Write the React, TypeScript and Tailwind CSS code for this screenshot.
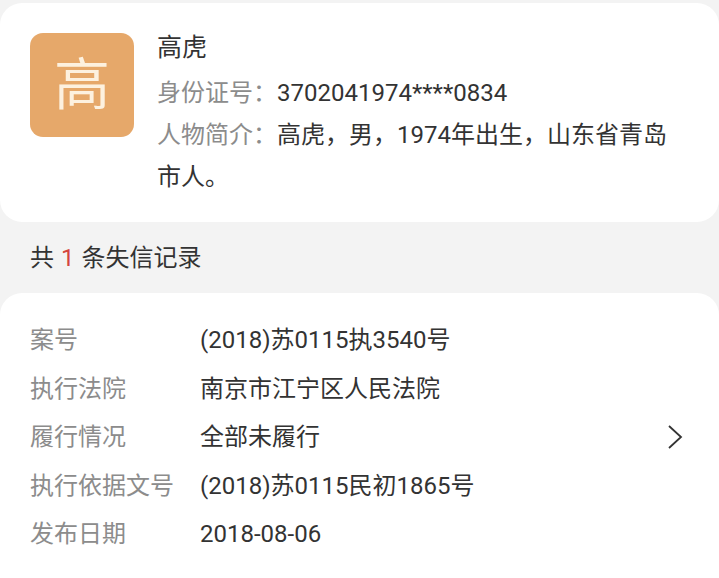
const rows = [
  { label: '案号', value: '(2018)苏0115执3540号' },
  { label: '执行法院', value: '南京市江宁区人民法院' },
  { label: '履行情况', value: '全部未履行' },
  { label: '执行依据文号', value: '(2018)苏0115民初1865号' },
  { label: '发布日期', value: '2018-08-06' },
];

export default function App() {
  return (
    <div
      className="min-h-[578px] bg-[#f3f3f3] pt-[3px] text-[#333333]"
      style={{ fontFamily: 'Roboto, "Noto Sans CJK SC", sans-serif' }}
    >
      {/* Person card */}
      <div className="bg-white rounded-[22px] pt-[24px] pb-[24px] pl-[30px] pr-[36px] flex gap-[23px]">
        <div className="mt-[6px] w-[104px] h-[104px] shrink-0 rounded-[13px] bg-[#e6a86a] flex items-center justify-center">
          <span className="text-[56px] leading-none text-[#fdf1df]">高</span>
        </div>
        <div className="flex-1">
          <div className="text-[25px] leading-[48px] -mt-[3px]">高虎</div>
          <div className="text-[24px] leading-[42px]">
            <span className="text-[#8c8c8c]">身份证号：</span>
            <span>3702041974****0834</span>
          </div>
          <p className="text-[24px] leading-[42px]">
            <span className="text-[#8c8c8c]">人物简介：</span>
            <span>高虎，男，1974年出生，山东省青岛市人。</span>
          </p>
        </div>
      </div>

      {/* Record count */}
      <div className="h-[71px] flex items-center px-[30px] text-[24px]">
        <span>共</span>
        <span className="text-[#d4453d] mx-[7px]">1</span>
        <span>条失信记录</span>
      </div>

      {/* Record card */}
      <div className="bg-white rounded-t-[22px] pt-[23px] pb-[23px] pl-[30px] pr-[36px] flex items-center">
        <div className="flex-1">
          {rows.map((row) => (
            <div key={row.label} className="flex h-[48.5px] items-center text-[24px]">
              <div className="w-[170px] shrink-0 text-[#8c8c8c]">{row.label}</div>
              <div>{row.value}</div>
            </div>
          ))}
        </div>
        <svg width="16" height="26" viewBox="0 0 16 26" className="shrink-0">
          <polyline points="2,2 14,13 2,24" fill="none" stroke="#333333" strokeWidth="1.8" />
        </svg>
      </div>
    </div>
  );
}
